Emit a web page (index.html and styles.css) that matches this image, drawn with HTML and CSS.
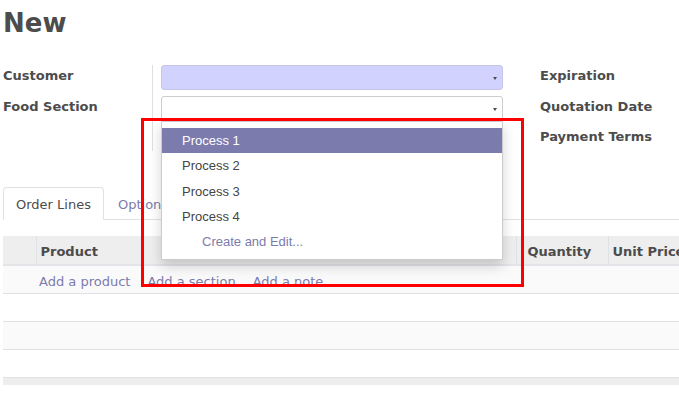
FILE: index.html
```html
<!DOCTYPE html>
<html lang="en">
<head>
    <meta charset="UTF-8">
    <meta name="viewport" content="width=device-width, initial-scale=1.0">
    <title>New Quotation</title>
    <link rel="stylesheet" href="styles.css">
</head>
<body>

    <div class="sheet">
        <h1 class="titulo">New</h1>

        <!-- Grupos de campos -->
        <div class="grupos">
            <div class="grupo-esq">
                <div class="col-rotulos">
                    <div class="rotulo">Customer</div>
                    <div class="rotulo">Food Section</div>
                </div>
                <div class="col-campos">
                    <div class="campo preenchido"><span class="seta"></span></div>
                    <div class="campo aberto">
                        <span class="seta"></span>
                        <!-- Lista do autocomplete -->
                        <ul class="autocomplete">
                            <li class="ativo">Process 1</li>
                            <li>Process 2</li>
                            <li>Process 3</li>
                            <li>Process 4</li>
                            <li class="criar">Create and Edit...</li>
                        </ul>
                    </div>
                </div>
            </div>
            <div class="grupo-dir">
                <div class="rotulo">Expiration</div>
                <div class="rotulo">Quotation Date</div>
                <div class="rotulo">Payment Terms</div>
            </div>
        </div>

        <!-- Abas -->
        <div class="abas">
            <div class="aba ativa">Order Lines</div>
            <div class="aba">Optional Products</div>
        </div>

        <div class="tabela-wrap">
            <table class="tabela">
                <colgroup>
                    <col style="width: 33px">
                    <col style="width: 480px">
                    <col style="width: 7px">
                    <col style="width: 85px">
                    <col style="width: 95px">
                    <col style="width: 80px">
                </colgroup>
                <thead>
                    <tr>
                        <th></th>
                        <th>Product</th>
                        <th></th>
                        <th>Quantity</th>
                        <th>Unit Price</th>
                        <th>Taxes</th>
                    </tr>
                </thead>
                <tbody>
                    <tr class="listrada">
                        <td></td>
                        <td colspan="5">
                            <div class="links">
                                <a>Add a product</a>
                                <a>Add a section</a>
                                <a>Add a note</a>
                            </div>
                        </td>
                    </tr>
                    <tr><td colspan="6"></td></tr>
                    <tr class="listrada"><td colspan="6"></td></tr>
                    <tr><td colspan="6"></td></tr>
                </tbody>
                <tfoot>
                    <tr><td colspan="6"></td></tr>
                </tfoot>
            </table>
        </div>
    </div>

    <!-- Destaque vermelho -->
    <div class="destaque"></div>

</body>
</html>
```

FILE: styles.css
```css
* { margin: 0; padding: 0; box-sizing: border-box; }
body { font-family: "DejaVu Sans", Verdana, sans-serif; font-size: 13px; color: #4c4c4c; background: #fff; overflow: hidden; }
.sheet { padding: 8px 0 0 3px; }
.titulo { font-size: 26px; line-height: 30px; font-weight: bold; color: #4c4c4c; }

.grupos { display: flex; margin-top: 27px; }
.grupo-esq { display: flex; }
.col-rotulos { width: 150px; border-right: 1px solid #e0e0e0; display: flex; flex-direction: column; gap: 6px; padding-bottom: 4px; }
.col-campos { padding-left: 8px; display: flex; flex-direction: column; gap: 6px; }
.rotulo { height: 25px; padding-top: 3px; line-height: 15px; font-weight: bold; white-space: nowrap; }
.grupo-dir { margin-left: 37px; display: flex; flex-direction: column; gap: 5.5px; }

.campo { position: relative; width: 342px; height: 25px; border: 1px solid #ccc; border-radius: 3px; background: #fff; display: flex; align-items: center; justify-content: flex-end; padding: 2px 5px 0 0; }
.campo.preenchido { background: #d2d2ff; border-color: #c6c6e8; }
.seta { width: 0; height: 0; border-left: 2.5px solid transparent; border-right: 2.5px solid transparent; border-top: 3px solid #4c4c4c; }

.autocomplete { position: absolute; top: 24px; left: -1px; width: 342px; list-style: none; background: #fff; border: 1px solid #ccc; padding: 6px 0 5px; box-shadow: 0 6px 12px rgba(0, 0, 0, 0.175); font-family: "Liberation Sans", Arial, sans-serif; font-size: 13px; color: #444; z-index: 5; }
.autocomplete li { height: 25.3px; line-height: 25px; padding-left: 20px; }
.autocomplete li.ativo { background: #7c7bad; color: #fff; }
.autocomplete li.criar { padding-left: 40px; color: #7c7bad; }

.abas { display: flex; margin-top: 36px; border-bottom: 1px solid #dee2e6; }
.aba { padding: 9px 12px 7px; line-height: 15px; border: 1px solid transparent; border-radius: 4px 4px 0 0; margin-right: 1px; margin-bottom: -1px; color: #7c7bad; white-space: nowrap; }
.aba.ativa { color: #4c4c4c; border-color: #dee2e6 #dee2e6 #fff; background: #fff; }

.tabela-wrap { margin-top: 16px; overflow: hidden; }
.tabela { border-collapse: collapse; table-layout: fixed; width: 780px; }
.tabela th { background: #eee; text-align: left; font-weight: bold; padding: 8px 4px 5px; line-height: 15px; border-left: 1px solid #dee2e6; border-bottom: 2px solid #e4e4e8; white-space: nowrap; overflow: hidden; }
.tabela th:first-child { border-left: none; }
.tabela td { height: 28px; padding: 8px 3px 4px; line-height: 15px; border-bottom: 1px solid #dee2e6; }
.tabela tr.listrada td { background: #fafafa; }
.tabela tfoot td { height: 7px; padding: 0; background: #eee; border: none; }
.links { display: flex; gap: 17px; }
.links a { color: #7c7bad; cursor: pointer; white-space: nowrap; }

.destaque { position: absolute; left: 141px; top: 118px; width: 383px; height: 169px; border: 3px solid #f00; z-index: 10; }
```
